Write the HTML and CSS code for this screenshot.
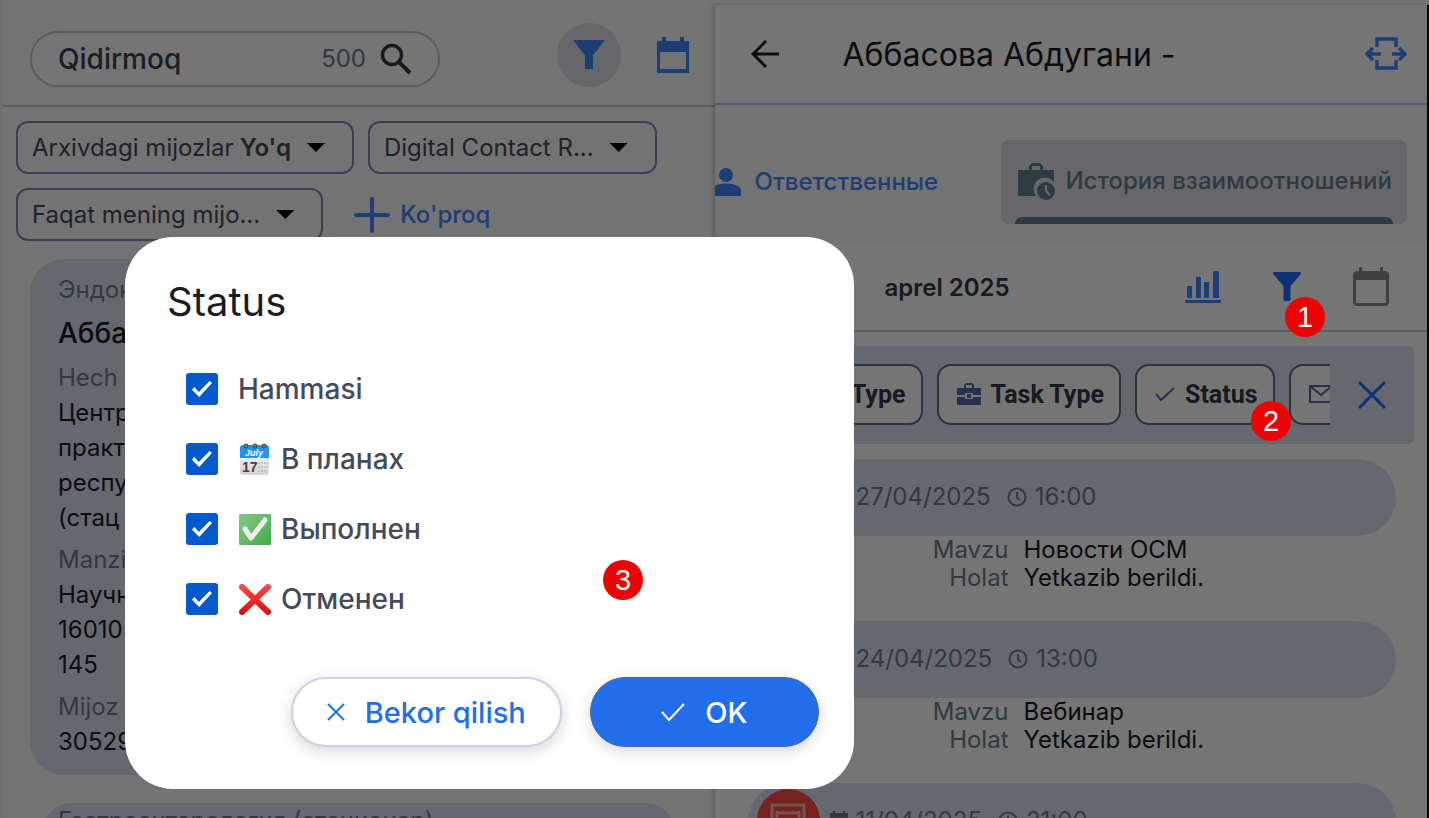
FILE: index.html
```
<!DOCTYPE html>
<html lang="uz">
<head>
    <meta charset="UTF-8">
    <meta name="viewport" content="width=device-width, initial-scale=1.0">
    <title>Mijozlar</title>
    <link rel="stylesheet" href="styles.css">
</head>
<body>
    <div class="app">
        <!-- Client list -->
        <section class="clients">
            <header class="clients-header">
                <div class="search">
                    <input type="text" value="Qidirmoq" aria-label="Qidirmoq">
                    <span class="search-count">500</span>
                    <svg width="32" height="32" viewBox="0 0 32 32" fill="none" stroke="currentColor"><circle cx="12" cy="12" r="9.5" stroke-width="3.4"/><path d="M19 19L30 30" stroke-width="4"/></svg>
                </div>
                <button class="icon-button active" aria-label="Filter">
                    <svg width="32" height="30" viewBox="0 0 32 30" fill="currentColor"><path d="M0 0H32L20 15.500V29H12V15.500Z"/></svg>
                </button>
                <button class="icon-button calendar-button" aria-label="Calendar">
                    <svg width="34" height="36" viewBox="0 0 34 36" fill="currentColor"><path fill-rule="evenodd" d="M1 4H6V0H10V4H24V0H28V4H33V36H1ZM4 15V32H30V15Z"/></svg>
                </button>
            </header>

            <div class="chips">
                <button class="chip">Arxivdagi mijozlar <b>Yo'q</b><i class="caret"></i></button>
                <button class="chip">Digital Contact R...<i class="caret"></i></button>
                <button class="chip">Faqat mening mijo...<i class="caret"></i></button>
                <button class="more">
                    <svg width="36" height="36" viewBox="0 0 36 36" stroke="currentColor" stroke-width="4" stroke-linecap="round"><path d="M18 2V34M2 18H34"/></svg>
                    Ko'proq
                </button>
            </div>

            <article class="client">
                <p class="muted">Эндок</p>
                <h2>Аббасова</h2>
                <p class="muted">Hech</p>
                <p>Центр<br>практ<br>респу<br>(стац</p>
                <p class="muted field">Manzil</p>
                <p>Научн<br>16010<br>145</p>
                <p class="muted field">Mijoz</p>
                <p>30529</p>
            </article>
            <article class="client-next">
                <p class="muted">Гастроэнтерология (стационар)</p>
            </article>
        </section>

        <!-- Client details -->
        <section class="details">
            <header class="details-header">
                <button class="plain" aria-label="Back">
                    <svg width="28" height="28" viewBox="0 0 28 28" fill="none" stroke="currentColor" stroke-width="3"><path d="M28 14H2M15 1L2 14L15 27"/></svg>
                </button>
                <h1>Аббасова Абдугани -</h1>
                <button class="plain blue" aria-label="Expand">
                    <svg width="42" height="34" viewBox="0 0 42 34" fill="none" stroke="currentColor" stroke-width="3.400"><path d="M12 10V2H31V10M12 23V31H31V23M2 17H16M8 11L2 17L8 23M27 17H40M34 11L40 17L34 23"/></svg>
                </button>
            </header>

            <nav class="tabs">
                <a class="tab" href="#owners">
                    <svg width="26" height="30" viewBox="0 0 26 30" fill="currentColor"><circle cx="11" cy="8" r="7"/><path d="M-3 29V23C-3 18 6 16.500 11 16.500S26 18 26 23V29Z"/></svg>
                    Ответственные
                </a>
                <a class="tab current" href="#history">
                    <svg width="38" height="38" viewBox="0 0 38 38"><path fill="currentColor" fill-rule="evenodd" d="M0 8H11V4L14 1H22L25 4V8H36V20A10.500 10.500 0 0 0 18 34H0ZM14 8H22V4H14Z"/><circle cx="28" cy="29" r="9" fill="currentColor"/><path d="M28 23V29L32 33" fill="none" stroke="#dfe2e8" stroke-width="2"/></svg>
                    История взаимоотношений
                </a>
            </nav>

            <div class="toolbar">
                <span class="month">aprel 2025</span>
                <button class="plain blue" aria-label="Chart">
                    <svg width="36" height="34" viewBox="0 0 36 34" fill="currentColor"><path d="M0 30H36V33H0ZM2 16H7V28H2ZM11 7H16V28H11ZM19 12H24V28H19ZM28 1H34V28H28Z"/></svg>
                </button>
                <button class="plain deep" aria-label="Filter">
                    <svg width="28" height="30" viewBox="0 0 28 30" fill="currentColor"><path d="M1 0H27Q29 1 27 3L17.500 14V28Q17.500 29 16 29H12Q10.500 29 10.500 28V14L1 3Q-1 1 1 0Z"/></svg>
                </button>
                <button class="plain gray" aria-label="Calendar">
                    <svg width="36" height="40" viewBox="0 0 36 40" fill="currentColor"><path fill-rule="evenodd" d="M4 4H6V0H9V4H27V0H30V4H32Q36 4 36 8V35Q36 39 32 39H4Q0 39 0 35V8Q0 4 4 4ZM3 13V36H33V13Z"/></svg>
                </button>
            </div>

            <div class="filter-bar">
                <div class="filter-strip">
                    <button class="filter first">Type</button>
                    <button class="filter">
                        <svg width="24" height="22" viewBox="0 0 24 22" fill="currentColor"><path fill-rule="evenodd" d="M0 5H7V2L9 0H15L17 2V5H24V12H16V10H8V12H0ZM9 5H15V2H9ZM0 14H8V16H16V14H24V22H0ZM10 11H14V15H10Z"/></svg>
                        Task Type
                    </button>
                    <button class="filter">
                        <svg width="20" height="16" viewBox="0 0 20 16" fill="none" stroke="currentColor" stroke-width="2"><path d="M1 8L6 14L19 2"/></svg>
                        Status
                    </button>
                    <button class="filter" aria-label="Mail">
                        <svg width="24" height="20" viewBox="0 0 24 20" fill="none" stroke="currentColor" stroke-width="2"><path d="M1 2H23V18H1ZM1 2L12 11L23 2"/></svg>
                    </button>
                </div>
                <button class="plain deep close" aria-label="Close">
                    <svg width="28" height="28" viewBox="0 0 28 28" stroke="currentColor" stroke-width="3"><path d="M1 1L27 27M27 1L1 27"/></svg>
                </button>
            </div>

            <ul class="events">
                <li>
                    <div class="event-head">
                        <span class="event-icon"></span>
                        <svg width="18" height="20" viewBox="0 0 18 20" fill="currentColor"><path d="M0 2H3V0H5V2H13V0H15V2H18V20H0Z"/></svg>
                        <time>27/04/2025</time>
                        <svg class="clock" width="20" height="20" viewBox="0 0 20 20" fill="none" stroke="currentColor" stroke-width="2"><circle cx="10" cy="10" r="8.500"/><path d="M10 5V10.500L13 13"/></svg>
                        <time>16:00</time>
                    </div>
                    <dl>
                        <dt>Mavzu</dt><dd>Новости ОСМ</dd>
                        <dt>Holat</dt><dd>Yetkazib berildi.</dd>
                    </dl>
                </li>
                <li>
                    <div class="event-head">
                        <span class="event-icon"></span>
                        <svg width="18" height="20" viewBox="0 0 18 20" fill="currentColor"><path d="M0 2H3V0H5V2H13V0H15V2H18V20H0Z"/></svg>
                        <time>24/04/2025</time>
                        <svg class="clock" width="20" height="20" viewBox="0 0 20 20" fill="none" stroke="currentColor" stroke-width="2"><circle cx="10" cy="10" r="8.500"/><path d="M10 5V10.500L13 13"/></svg>
                        <time>13:00</time>
                    </div>
                    <dl>
                        <dt>Mavzu</dt><dd>Вебинар</dd>
                        <dt>Holat</dt><dd>Yetkazib berildi.</dd>
                    </dl>
                </li>
                <li>
                    <div class="event-head">
                        <span class="event-icon">
                            <svg width="36" height="36" viewBox="0 0 36 36" fill="none" stroke="currentColor" stroke-width="3"><path d="M2 2H34V34H2ZM7 10H29M7 17H29M7 24H29M7 8V26M29 8V26"/></svg>
                        </span>
                        <svg width="18" height="20" viewBox="0 0 18 20" fill="currentColor"><path d="M0 2H3V0H5V2H13V0H15V2H18V20H0Z"/></svg>
                        <time>11/04/2025</time>
                        <svg class="clock" width="20" height="20" viewBox="0 0 20 20" fill="none" stroke="currentColor" stroke-width="2"><circle cx="10" cy="10" r="8.500"/><path d="M10 5V10.500L13 13"/></svg>
                        <time>21:00</time>
                    </div>
                </li>
            </ul>
        </section>
    </div>

    <div class="backdrop"></div>

    <!-- Status dialog -->
    <form class="dialog" role="dialog" aria-labelledby="dialog-title">
        <h2 id="dialog-title">Status</h2>
        <div class="options">
            <label><input type="checkbox" checked>Hammasi</label>
            <label><input type="checkbox" checked>
                <svg width="34" height="34" viewBox="0 0 34 34">
                    <defs><linearGradient id="paper" x2="0" y2="1"><stop offset="0" stop-color="#fff"/><stop offset="1" stop-color="#d2d2d2"/></linearGradient></defs>
                    <rect x="2" y="4" width="29" height="29" rx="3" fill="url(#paper)"/>
                    <path d="M2 16V6Q2 3 5 3H28Q31 3 31 6V16Z" fill="#2492ee"/>
                    <g fill="#777" stroke="#444"><circle cx="8" cy="4" r="2"/><circle cx="17" cy="4" r="2"/><circle cx="26" cy="4" r="2"/></g>
                    <text x="16" y="14" text-anchor="middle" class="emoji-month">July</text>
                    <text x="4" y="30" class="emoji-day">17</text>
                    <path d="M20 21H30M20 25H30M20 29H28" stroke="#bbb" stroke-width="1.500" stroke-dasharray="2 1"/>
                </svg>
                В планах</label>
            <label><input type="checkbox" checked>
                <svg width="34" height="34" viewBox="0 0 34 34">
                    <defs><linearGradient id="green" x2="1" y2="1"><stop offset="0" stop-color="#83cc86"/><stop offset="1" stop-color="#43a94b"/></linearGradient></defs>
                    <rect x="1" y="2" width="32" height="31" rx="1" fill="url(#green)"/>
                    <path d="M7 17L13 26L27 8" fill="none" stroke="#eee" stroke-width="5" stroke-linecap="round" stroke-linejoin="round"/>
                </svg>
                Выполнен</label>
            <label><input type="checkbox" checked>
                <svg width="34" height="34" viewBox="0 0 34 34">
                    <defs><linearGradient id="red" gradientUnits="userSpaceOnUse" x1="0" y1="2" x2="0" y2="33"><stop offset="0" stop-color="#fb4c4c"/><stop offset="1" stop-color="#d90b0b"/></linearGradient></defs>
                    <path d="M4 5L30 30M30 5L4 30" stroke="url(#red)" stroke-width="6" stroke-linecap="round"/>
                </svg>
                Отменен</label>
        </div>
        <div class="actions">
            <button type="button" class="cancel">
                <svg width="18" height="18" viewBox="0 0 18 18" stroke="currentColor" stroke-width="2"><path d="M1 1L17 17M17 1L1 17"/></svg>
                Bekor qilish
            </button>
            <button type="button" class="ok">
                <svg width="24" height="18" viewBox="0 0 24 18" fill="none" stroke="currentColor" stroke-width="2"><path d="M1 9L8 17L23 1"/></svg>
                OK
            </button>
        </div>
        <span class="marker marker-dialog">3</span>
    </form>

    <span class="marker marker-filter">1</span>
    <span class="marker marker-status">2</span>
</body>
</html>
```
FILE: styles.css
```
* {
    box-sizing: border-box;
}

body {
    margin: 0;
    height: 100vh;
    overflow: hidden;
    position: relative;
    font-family: Inter, "Liberation Sans", sans-serif;
    font-size: 24px;
    color: #1a1c22;
}

h1, h2, p, ul, dl, dd {
    margin: 0;
    padding: 0;
}

button, input {
    font: inherit;
    color: inherit;
}

button {
    display: flex;
    align-items: center;
    background: none;
    border: none;
    padding: 0;
    white-space: nowrap;
    cursor: pointer;
}

svg {
    flex: none;
}

.app {
    display: grid;
    grid-template-columns: 1fr 1fr;
    height: 100vh;
    overflow: hidden;
    background-color: #fafafd;
}

.blue {
    color: #4088ff;
}

.deep {
    color: #1c6cff;
}

.gray {
    color: #8c8c90;
}

.muted {
    color: #64808c;
}

/* Client list */
.clients {
    min-width: 0;
    background-color: #fafafd;
    border-left: 2px solid #eeeefa;
}

.clients-header {
    display: flex;
    align-items: center;
    height: 107px;
    padding: 12px 18px 0 28px;
    border-bottom: 2px solid #b8c8ee;
}

.search {
    display: flex;
    align-items: center;
    width: 410px;
    height: 56px;
    padding: 0 26px;
    border: 2px solid #c4c6dc;
    border-radius: 28px;
    background-color: #ffffff;
}

.search input {
    flex: 1;
    min-width: 0;
    padding: 0;
    border: none;
    outline: none;
    background: none;
    font-size: 28px;
    font-weight: 500;
    color: #3c4250;
}

.search-count {
    margin-right: 14px;
    font-size: 24px;
    color: #64808c;
}

.search svg {
    color: #343a46;
}

.icon-button {
    justify-content: center;
    width: 64px;
    height: 64px;
    margin: 0 0 8px auto;
    border-radius: 50%;
    color: #4088ff;
}

.icon-button.active {
    background-color: #dedfea;
}

.calendar-button {
    width: 48px;
    margin-left: 28px;
}

.chips {
    display: flex;
    flex-wrap: wrap;
    gap: 14px;
    padding: 14px;
}

.chip {
    height: 53px;
    padding: 0 27px 0 14px;
    border: 2px solid #7c8cb0;
    border-radius: 12px;
    color: #444a58;
}

.chip b {
    margin-left: 6px;
    font-weight: 600;
}

.caret {
    width: 18px;
    height: 9px;
    margin-left: 16px;
    background-color: #000000;
    clip-path: polygon(0 0, 100% 0, 50% 100%);
}

.more {
    gap: 10px;
    margin-left: 17px;
    font-weight: 500;
    color: #4088ff;
}

.client {
    margin: 4px 28px 0;
    padding: 13px 28px 16px;
    border-radius: 34px;
    background-color: #dfe3f5;
    line-height: 35px;
}

.client h2 {
    font-size: 28px;
    font-weight: 500;
    line-height: 53px;
}

.client .field {
    margin-top: 7px;
}

.client-next {
    margin: 28px 41px 0;
    padding: 0 15px;
    border-radius: 28px 28px 0 0;
    background-color: #dfe3f5;
    line-height: 35px;
}

/* Client details */
.details {
    min-width: 0;
    margin-top: 5px;
    background-color: #ffffff;
    border-right: 2px solid #000000;
    box-shadow: -2px 0 4px rgba(0, 0, 0, 0.2);
}

.details-header {
    display: flex;
    align-items: center;
    height: 100px;
    padding: 0 20px 0 36px;
    border-bottom: 2px solid #b8c8ee;
}

.details-header h1 {
    flex: 1;
    margin-left: 64px;
    font-size: 32px;
    font-weight: 400;
}

.tabs {
    display: flex;
    align-items: center;
    justify-content: space-between;
    height: 137px;
    padding: 34px 20px 18px 0;
    background-color: #fafafd;
}

.tab {
    display: flex;
    align-items: center;
    gap: 14px;
    color: #4088ff;
    font-weight: 500;
    text-decoration: none;
    white-space: nowrap;
}

.tab.current {
    position: relative;
    gap: 9px;
    height: 84px;
    padding: 0 15px 2px 17px;
    border-radius: 8px;
    background-color: #e0e1e8;
    color: #64808c;
}

.tab.current::after {
    content: "";
    position: absolute;
    left: 14px;
    right: 14px;
    bottom: 0;
    height: 7px;
    border-radius: 7px 7px 0 0;
    background-color: #64808c;
}

.toolbar {
    display: flex;
    align-items: center;
    gap: 52px;
    height: 90px;
    padding: 2px 38px 0 170px;
    border-bottom: 2px solid #b8c8ee;
}

.month {
    flex: 1;
    font-weight: 600;
    color: #343a46;
}

.filter-bar {
    display: flex;
    align-items: center;
    height: 98px;
    margin: 14px 13px 15px 14px;
    border-radius: 6px;
    background-color: #dfe3f5;
}

.filter-strip {
    display: flex;
    flex: 1;
    gap: 14px;
    min-width: 0;
    padding: 0 0 2px 14px;
    overflow: hidden;
}

.filter {
    flex: none;
    gap: 10px;
    height: 61px;
    padding: 0 15px 0 18px;
    border: 2px solid #5a7482;
    border-radius: 14px;
    background-color: #ffffff;
    font-family: Roboto, "Liberation Sans", sans-serif;
    font-size: 25px;
    font-weight: 700;
    color: #343a46;
}

.filter.first {
    justify-content: flex-end;
    width: 180px;
}

.filter svg {
    color: #546ca8;
}

.close {
    margin: 0 28px;
}

.events {
    padding: 0 31px 0 33px;
    list-style: none;
}

.events li {
    height: 162px;
}

.event-head {
    display: flex;
    align-items: center;
    height: 77px;
    padding: 0 0 2px 9px;
    border-radius: 39px;
    background-color: #dfe3f5;
    color: #64808c;
}

.event-icon {
    display: flex;
    align-items: center;
    justify-content: center;
    width: 63px;
    height: 63px;
    margin-right: 10px;
    border-radius: 50%;
    background-color: #ff4c46;
    color: #ffb6b4;
}

.event-head time {
    margin-left: 8px;
}

.event-head .clock {
    margin-left: 16px;
}

.events dl {
    display: grid;
    grid-template-columns: 261px 1fr;
    column-gap: 15px;
    line-height: 28px;
}

.events dt {
    text-align: right;
    color: #64808c;
}

/* Status dialog */
.backdrop {
    position: absolute;
    inset: 0;
    background-color: rgba(0, 0, 0, 0.54);
}

.dialog {
    position: absolute;
    top: 237px;
    left: 125px;
    width: 51%;
    padding: 38px 35px 42px 42px;
    border-radius: 48px;
    background-color: #ffffff;
}

.dialog h2 {
    font-size: 40px;
    font-weight: 400;
    line-height: 54px;
    color: #1a1c22;
}

.options {
    display: flex;
    flex-direction: column;
    gap: 36px;
    padding: 43px 0 61px 19px;
    font-size: 28px;
    font-weight: 500;
    color: #454b5a;
}

.options label {
    display: flex;
    align-items: center;
    gap: 9px;
    line-height: 34px;
}

.options input {
    appearance: none;
    display: flex;
    align-items: center;
    justify-content: center;
    width: 32px;
    height: 32px;
    margin: 0 11px 0 0;
    border-radius: 3px;
    background-color: #0659cc;
}

.options input:checked::after {
    content: "";
    width: 20px;
    height: 16px;
    background-color: #ffffff;
    clip-path: polygon(0 54%, 12% 38%, 34% 68%, 88% 0, 100% 12%, 36% 100%);
}

.emoji-month {
    font: italic 700 9px "Liberation Sans", sans-serif;
    fill: #ffffff;
}

.emoji-day {
    font: 700 14px "Liberation Sans", sans-serif;
    fill: #444444;
}

.actions {
    display: flex;
    justify-content: flex-end;
    gap: 28px;
    font-size: 29px;
    font-weight: 500;
}

.actions button {
    justify-content: center;
    gap: 20px;
    height: 70px;
    border: 2px solid #ccd0e4;
    border-radius: 35px;
    box-shadow: 0 4px 14px rgba(0, 0, 0, 0.16);
}

.actions .cancel {
    width: 271px;
    background-color: #ffffff;
    color: #226eea;
}

.actions .ok {
    width: 229px;
    border: 1px solid #4c6494;
    background-color: #226eea;
    color: #ffffff;
}

/* Step markers */
.marker {
    position: absolute;
    width: 40px;
    height: 40px;
    border-radius: 50%;
    background-color: #ea0404;
    color: #ffffff;
    font-family: "Liberation Sans", sans-serif;
    font-size: 29px;
    line-height: 41px;
    text-align: center;
}

.marker-filter {
    top: 297px;
    right: 104px;
}

.marker-status {
    top: 401px;
    right: 138px;
}

.marker-dialog {
    top: 323px;
    left: 478px;
}
```
